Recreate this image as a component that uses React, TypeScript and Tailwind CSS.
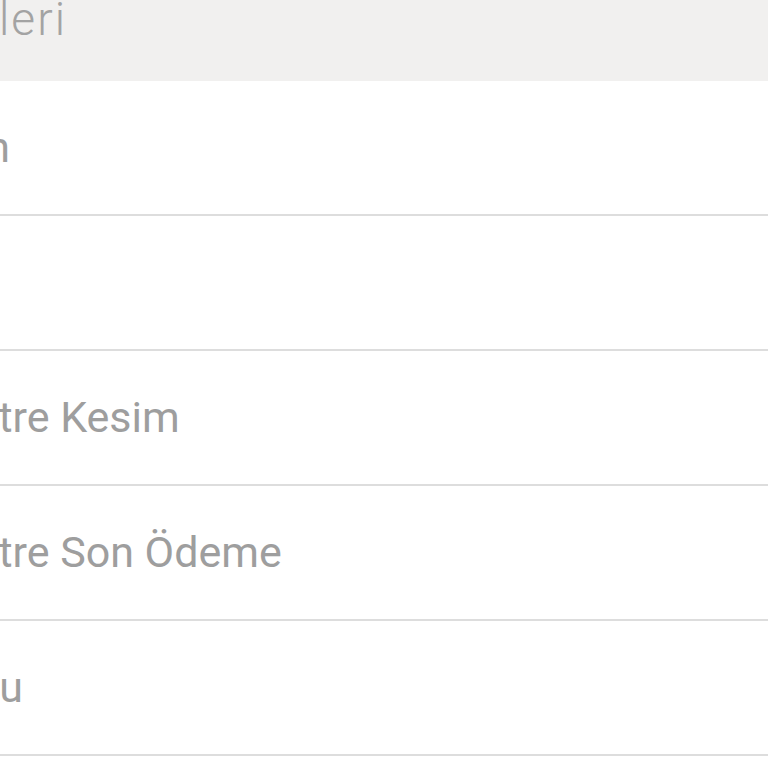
import React from "react";

const font = { fontFamily: "Roboto, 'Noto Sans', sans-serif" };

function Row({ children }: { children?: React.ReactNode }) {
  return (
    <div className="flex h-[135px] items-center border-b-2 border-[#dddddd] bg-white overflow-hidden">
      {children}
    </div>
  );
}

export default function App() {
  return (
    <div className="w-[768px] h-[768px] overflow-hidden bg-white" style={font}>
      <div className="h-[81px] bg-[#f1f0ef] overflow-hidden">
        <div className="flex w-[67px] justify-end mt-[-4px]">
          <span className="whitespace-nowrap text-[46px] leading-[46px] font-light tracking-[2px] text-[#a3a3a3]">
            Bilgileri
          </span>
        </div>
      </div>
      <Row>
        <div className="flex w-[10px] shrink-0 justify-end">
          <span className="whitespace-nowrap text-[43px] leading-[43px] text-[#9e9e9e]">Kart Limitin</span>
        </div>
      </Row>
      <Row />
      <Row>
        <span className="ml-[-70px] whitespace-nowrap text-[43px] leading-[43px] text-[#9e9e9e]">Ekstre Kesim</span>
      </Row>
      <Row>
        <span className="ml-[-70px] whitespace-nowrap text-[43px] leading-[43px] text-[#9e9e9e]">Ekstre Son Ödeme</span>
      </Row>
      <Row>
        <div className="flex w-[23px] shrink-0 justify-end">
          <span className="whitespace-nowrap text-[43px] leading-[43px] text-[#9e9e9e]">Kart Durumu</span>
        </div>
      </Row>
    </div>
  );
}
